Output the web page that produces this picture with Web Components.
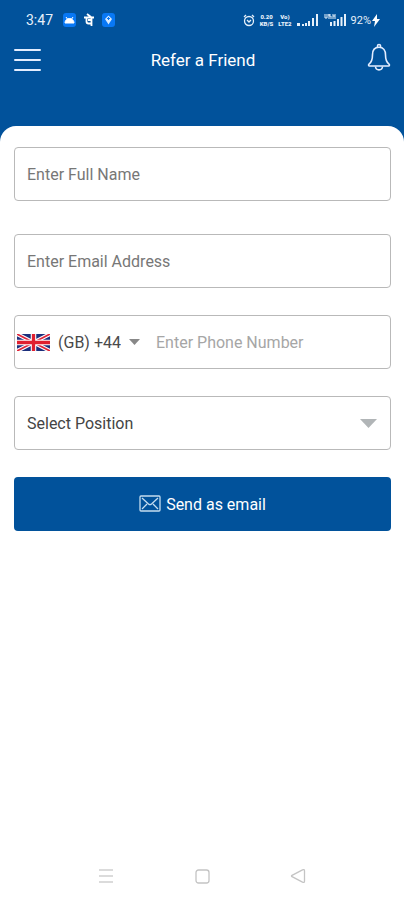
<!DOCTYPE html>
<html lang="en">
<head>
<meta charset="UTF-8">
<meta name="viewport" content="width=device-width, initial-scale=1">
<title>Refer a Friend</title>
<style>
    body {
        margin: 0;
        background: #fff;
        font-family: Roboto, sans-serif;
    }
</style>
</head>
<body>
<refer-page>
    <status-bar slot="top" time="3:47" battery="92%"></status-bar>
    <app-header slot="top">Refer a Friend</app-header>

    <text-field class="name" label="Enter Full Name" type="text"></text-field>
    <text-field class="email" label="Enter Email Address" type="email"></text-field>
    <phone-field label="Enter Phone Number"></phone-field>
    <position-select label="Select Position"></position-select>
    <send-button>Send as email</send-button>

    <nav-bar slot="bottom"></nav-bar>
</refer-page>

<script>
class ReferPage extends HTMLElement {
    constructor() {
        super();
        this.attachShadow({ mode: 'open' });
    }

    connectedCallback() {
        this.shadowRoot.innerHTML = `
            <style>
                :host {
                    display: flex;
                    flex-direction: column;
                    min-height: 100vh;
                    background: #01529b;
                }

                .top {
                    padding-bottom: 46px;
                }

                main {
                    flex: 1;
                    display: flex;
                    flex-direction: column;
                    background: #fff;
                    border-radius: 16px 16px 0 0;
                }

                form {
                    flex: 1;
                    display: flex;
                    flex-direction: column;
                    gap: 27px;
                    padding: 21px 13px 27px 14px;
                }

                ::slotted(.name) {
                    margin-bottom: 6px;
                }
            </style>

            <div class="top"><slot name="top"></slot></div>
            <main>
                <form><slot></slot></form>
                <slot name="bottom"></slot>
            </main>
        `;
    }
}

class StatusBar extends HTMLElement {
    constructor() {
        super();
        this.attachShadow({ mode: 'open' });
    }

    connectedCallback() {
        const time = this.getAttribute('time');
        const battery = this.getAttribute('battery');

        this.shadowRoot.innerHTML = `
            <style>
                :host {
                    display: flex;
                    justify-content: space-between;
                    align-items: center;
                    height: 40px;
                    padding: 0 24px 0 26px;
                    color: #e6f0fa;
                    font-size: 14px;
                }

                div {
                    display: flex;
                    align-items: center;
                }

                .left {
                    gap: 7px;
                }

                .right {
                    gap: 5px;
                }

                .time {
                    margin-right: 3px;
                }

                .tiny {
                    flex-direction: column;
                    font-size: 6px;
                    line-height: 7px;
                    font-weight: 900;
                }

                .battery {
                    font-size: 11px;
                }

                .charge {
                    gap: 1px;
                }

                svg {
                    display: block;
                }
            </style>

            <div class="left">
                <span class="time">${time}</span>
                <svg width="13" height="14" viewBox="0 0 13 14">
                    <rect width="13" height="14" rx="3" fill="#0878f5"/>
                    <path d="M2 10a4.5 4.5 0 0 1 9 0zM3 4l2 3M10 4L8 7" fill="#fff" stroke="#fff"/>
                </svg>
                <svg width="12" height="14" viewBox="0 0 12 14" fill="none" stroke="#fff" stroke-width="1.8">
                    <path d="M1 4.5h10M4 1l4 3M8.5 4.5V13M3.5 4.5v4q0 2 2 2h3M8 7H5"/>
                </svg>
                <svg width="13" height="14" viewBox="0 0 13 14">
                    <rect width="13" height="14" rx="3" fill="#0878f5"/>
                    <path d="M6.5 2.5L10 6 6.5 11.5 3 6z" fill="#d7eaff"/>
                    <path d="M6.5 4v3M5 5.5h3" stroke="#0878f5"/>
                </svg>
            </div>
            <div class="right">
                <svg width="12" height="13" viewBox="0 0 12 13" fill="none" stroke="#e6f0fa" stroke-width="1.3">
                    <circle cx="6" cy="7" r="4.5"/>
                    <path d="M1 3l2-2M11 3L9 1M4 6l2 2 2-2"/>
                </svg>
                <div class="tiny"><span>0.20</span><span>KB/S</span></div>
                <div class="tiny"><span>Vo)</span><span>LTE2</span></div>
                <svg width="22" height="12" viewBox="0 0 22 12" fill="#e6f0fa">
                    <path d="M0 9h3v3H0zM5 10h2v2H5zM8 9h2v3H8zM11 7h2v5h-2zM15 4h2v8h-2zM19 0h2v12h-2z"/>
                </svg>
                <svg width="22" height="12" viewBox="0 0 22 12" fill="none" stroke="#e6f0fa">
                    <path d="M1 0v4h2V0M5 0v5M7 0H5v2h2v3M9 0v5M11 0v5M9 2h2"/>
                    <path d="M7 12V8M10.5 12V7M14 12V5M17.5 12V3M21 12V0" stroke-width="2"/>
                </svg>
                <div class="charge">
                    <span class="battery">${battery}</span>
                    <svg width="8" height="13" viewBox="0 0 8 13" fill="#fff">
                        <path d="M5 0L0 7h3l-1 6 6-8H5z"/>
                    </svg>
                </div>
            </div>
        `;
    }
}

class AppHeader extends HTMLElement {
    constructor() {
        super();
        this.attachShadow({ mode: 'open' });
    }

    connectedCallback() {
        this.shadowRoot.innerHTML = `
            <style>
                :host {
                    display: grid;
                    grid-template-columns: 28px 1fr 28px;
                    align-items: center;
                    height: 40px;
                    padding: 0 11px 0 13px;
                    color: #fff;
                }

                h1 {
                    margin: 0;
                    font-size: 17px;
                    line-height: 24px;
                    font-weight: 400;
                    text-align: center;
                }

                button {
                    padding: 0;
                    border: 0;
                    background: none;
                    cursor: pointer;
                }

                svg {
                    display: block;
                }
            </style>

            <button type="button" aria-label="Menu">
                <svg width="28" height="28" viewBox="0 0 28 28" stroke="#e3edff" stroke-width="2" stroke-linecap="round">
                    <path d="M2 4h25M2 14h25M2 24h25"/>
                </svg>
            </button>
            <h1><slot></slot></h1>
            <button type="button" aria-label="Notifications">
                <svg width="28" height="34" viewBox="0 0 28 34" fill="none" stroke="#e3edff" stroke-width="1.6" stroke-linejoin="round">
                    <path d="M12.5 4.5V3a1.500 1.500 0 0 1 3 0v1.500"/>
                    <path d="M14 4.200c-4.500 0-6.500 3.300-6.500 7.500 0 5-1 7.500-3.500 9.500-.8.7-.5 1.800.5 1.800h19c1 0 1.300-1.100.5-1.800-2.500-2-3.500-4.500-3.500-9.500 0-4.200-2-7.500-6.500-7.500z"/>
                    <path d="M10.500 23.500c.3 4.500 6.700 4.500 7 0"/>
                </svg>
            </button>
        `;
    }
}

class TextField extends HTMLElement {
    constructor() {
        super();
        this.attachShadow({ mode: 'open' });
    }

    connectedCallback() {
        const label = this.getAttribute('label');
        const type = this.getAttribute('type');

        this.shadowRoot.innerHTML = `
            <style>
                :host {
                    display: block;
                }

                input {
                    display: block;
                    box-sizing: border-box;
                    width: 100%;
                    height: 54px;
                    padding: 0 12px;
                    border: 1px solid #b9b9b9;
                    border-radius: 4px;
                    background: #fff;
                    color: #444;
                    font: 16px Roboto, sans-serif;
                }

                input::placeholder {
                    color: #777;
                    opacity: 1;
                }
            </style>

            <input type="${type}" placeholder="${label}" aria-label="${label}">
        `;
    }
}

class PhoneField extends HTMLElement {
    constructor() {
        super();
        this.attachShadow({ mode: 'open' });
    }

    connectedCallback() {
        const label = this.getAttribute('label');

        this.shadowRoot.innerHTML = `
            <style>
                :host {
                    display: flex;
                    align-items: center;
                    box-sizing: border-box;
                    height: 54px;
                    padding: 0 12px 0 2px;
                    border: 1px solid #b9b9b9;
                    border-radius: 4px;
                }

                svg {
                    display: block;
                    flex: none;
                }

                select {
                    appearance: none;
                    margin: 0 8px;
                    padding: 0;
                    border: 0;
                    background: none;
                    color: #4a4a4a;
                    font: 16px Roboto, sans-serif;
                }

                input {
                    flex: 1;
                    min-width: 0;
                    margin-left: 16px;
                    padding: 0;
                    border: 0;
                    background: none;
                    color: #444;
                    font: 16px Roboto, sans-serif;
                }

                input::placeholder {
                    color: #a6a6a6;
                    opacity: 1;
                }
            </style>

            <svg width="33" height="17" viewBox="0 0 60 30" preserveAspectRatio="none">
                <path d="M0 0h60v30H0z" fill="#1c2f7c"/>
                <path d="M0 0l60 30M60 0L0 30" stroke="#fff" stroke-width="7"/>
                <path d="M0 0l60 30M60 0L0 30" stroke="#e0263a" stroke-width="3"/>
                <path d="M30 0v30M0 15h60" stroke="#fff" stroke-width="10"/>
                <path d="M30 0v30M0 15h60" stroke="#e0202f" stroke-width="6"/>
            </svg>
            <select aria-label="Country code">
                <option>(GB) +44</option>
            </select>
            <svg width="11" height="6" viewBox="0 0 11 6"><path d="M0 0h11L5.500 6z" fill="#888"/></svg>
            <input type="tel" placeholder="${label}" aria-label="${label}">
        `;
    }
}

class PositionSelect extends HTMLElement {
    constructor() {
        super();
        this.attachShadow({ mode: 'open' });
    }

    connectedCallback() {
        const label = this.getAttribute('label');

        this.shadowRoot.innerHTML = `
            <style>
                :host {
                    display: grid;
                    align-items: center;
                }

                select {
                    grid-area: 1 / 1;
                    appearance: none;
                    width: 100%;
                    height: 54px;
                    padding: 0 12px;
                    border: 1px solid #b9b9b9;
                    border-radius: 4px;
                    background: #fff;
                    color: #444;
                    font: 16px Roboto, sans-serif;
                }

                svg {
                    grid-area: 1 / 1;
                    justify-self: end;
                    margin-right: 14px;
                    pointer-events: none;
                }
            </style>

            <select aria-label="${label}">
                <option>${label}</option>
            </select>
            <svg width="17" height="9" viewBox="0 0 17 9"><path d="M0 0h17L8.500 9z" fill="#b1b5b7"/></svg>
        `;
    }
}

class SendButton extends HTMLElement {
    constructor() {
        super();
        this.attachShadow({ mode: 'open' });
    }

    connectedCallback() {
        this.shadowRoot.innerHTML = `
            <style>
                :host {
                    display: block;
                }

                button {
                    display: flex;
                    align-items: center;
                    justify-content: center;
                    gap: 5px;
                    width: 100%;
                    height: 54px;
                    padding: 0;
                    border: 0;
                    border-radius: 4px;
                    background: #01529b;
                    color: #fff;
                    font: 16px Roboto, sans-serif;
                    cursor: pointer;
                }
            </style>

            <button type="button">
                <svg width="22" height="18" viewBox="0 0 22 18" fill="none" stroke="#c5ddf0" stroke-width="1.3" stroke-linejoin="round">
                    <rect x="1" y="1" width="20" height="15" rx="1"/>
                    <path d="M3 3l6.500 6q1.500 1.300 3 0L19 3M3 14l5-5M19 14l-5-5"/>
                </svg>
                <slot></slot>
            </button>
        `;
    }
}

class NavBar extends HTMLElement {
    constructor() {
        super();
        this.attachShadow({ mode: 'open' });
    }

    connectedCallback() {
        this.shadowRoot.innerHTML = `
            <style>
                :host {
                    display: flex;
                    justify-content: center;
                    align-items: center;
                    height: 48px;
                }

                button {
                    padding: 0 40px;
                    border: 0;
                    background: none;
                }

                svg {
                    display: block;
                }
            </style>

            <button type="button" aria-label="Recent apps">
                <svg width="16" height="16" viewBox="0 0 16 16" stroke="#cfcfcf" stroke-width="1.5">
                    <path d="M1 2h14M1 8h14M1 14h14"/>
                </svg>
            </button>
            <button type="button" aria-label="Home">
                <svg width="16" height="16" viewBox="0 0 16 16" fill="none" stroke="#c4c4c4" stroke-width="1.3">
                    <rect x="2" y="2" width="13" height="13" rx="2.5"/>
                </svg>
            </button>
            <button type="button" aria-label="Back">
                <svg width="16" height="16" viewBox="0 0 16 16" fill="none" stroke="#c4c4c4" stroke-width="1.3" stroke-linejoin="round">
                    <path d="M2 7.300L12.500 1.800q2-.8 2 1v10.400q0 1.800-2 1L2 8.700q-1-.7 0-1.400z"/>
                </svg>
            </button>
        `;
    }
}

customElements.define('refer-page', ReferPage);
customElements.define('status-bar', StatusBar);
customElements.define('app-header', AppHeader);
customElements.define('text-field', TextField);
customElements.define('phone-field', PhoneField);
customElements.define('position-select', PositionSelect);
customElements.define('send-button', SendButton);
customElements.define('nav-bar', NavBar);
</script>
</body>
</html>
